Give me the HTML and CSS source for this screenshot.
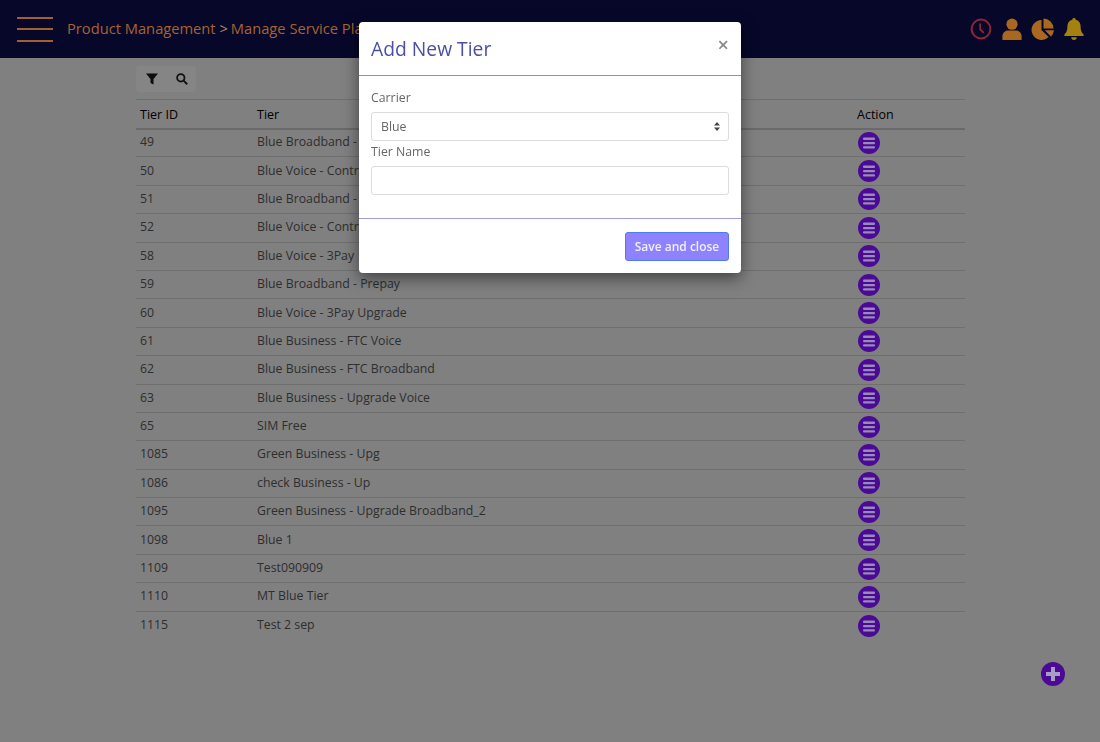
FILE: index.html
```html
<!DOCTYPE html>
<html lang="en">
<head>
  <meta charset="UTF-8" />
  <meta name="viewport" content="width=device-width, initial-scale=1.0" />
  <title>Manage Service Plan Tiers</title>
  <link rel="stylesheet" href="styles.css">
</head>
<body>
  <svg class="defs" width="0" height="0">
    <symbol id="ico-menu" viewBox="0 0 22 22">
      <circle cx="11" cy="11" r="11" fill="#4a0a96" />
      <rect x="5" y="5.6" width="12" height="2.3" rx="1" fill="#9a8ab8" />
      <rect x="5" y="9.9" width="12" height="2.3" rx="1" fill="#9a8ab8" />
      <rect x="5" y="14.2" width="12" height="2.3" rx="1" fill="#9a8ab8" />
    </symbol>
  </svg>

  <header class="topbar">
    <div class="burger"><span></span><span></span><span></span></div>
    <div class="crumbs">Product Management <span class="sep">&gt;</span>Manage Service Plans</div>
    <div class="top-icons">
      <svg class="clock" width="22" height="22" viewBox="0 0 22 22">
        <circle cx="11" cy="11" r="9.4" fill="none" stroke="#8c2632" stroke-width="2" />
        <path d="M10.2 5.5v6l3.6 3.4" fill="none" stroke="#8c2632" stroke-width="1.8" />
      </svg>
      <svg width="20" height="22" viewBox="0 0 20 22">
        <circle cx="10" cy="6.2" r="5.6" fill="#a9681f" />
        <path d="M0.4 22v-3.6c0-3.4 2.6-5.8 5.6-5.8h8c3 0 5.6 2.4 5.6 5.8V22z" fill="#a9681f" />
      </svg>
      <svg width="24" height="22" viewBox="0 0 24 22">
        <path d="M10.5 2V12L17.6 19.1A10 10 0 1 1 10.5 2z" fill="#a9681f" />
        <path d="M12.5 0.5A10 10 0 0 1 22.5 10.5H12.5z" fill="#a9681f" />
        <path d="M13.800 12.300H23A10 10 0 0 1 20 18.500z" fill="#a9681f" />
      </svg>
      <svg width="20" height="22" viewBox="0 0 20 22">
        <path d="M10 0a1.6 1.6 0 0 1 1.6 1.8c3.2.7 5 3.2 5 6.4 0 5 1.4 6.6 3 8.2v1.7H.4v-1.7c1.6-1.6 3-3.200 3-8.200 0-3.200 1.800-5.700 5-6.400A1.600 1.600 0 0 1 10 0z" fill="#a48210" />
        <path d="M7.300 19.300h5.400a2.700 2.700 0 0 1-5.400 0z" fill="#a48210" />
      </svg>
    </div>
  </header>

  <main class="content">
    <div class="tools">
      <svg width="12" height="12" viewBox="0 0 12 12"><path d="M0 .5h12L7.500 6v5.500l-3-1.500V6z" fill="#0c0c0c" /></svg>
      <svg width="12" height="12" viewBox="0 0 12 12">
        <circle cx="4.800" cy="4.800" r="3.700" fill="none" stroke="#111" stroke-width="1.800" />
        <path d="M7.600 7.600l3.600 3.600" stroke="#111" stroke-width="2" />
      </svg>
    </div>

    <table class="tiers">
      <thead>
        <tr><th class="col-id">Tier ID</th><th>Tier</th><th class="col-action">Action</th></tr>
      </thead>
      <tbody>
        <tr><td>49</td><td>Blue Broadband - Contract</td><td><svg class="act"><use href="#ico-menu" /></svg></td></tr>
        <tr><td>50</td><td>Blue Voice - Contract</td><td><svg class="act"><use href="#ico-menu" /></svg></td></tr>
        <tr><td>51</td><td>Blue Broadband - Upgrade</td><td><svg class="act"><use href="#ico-menu" /></svg></td></tr>
        <tr><td>52</td><td>Blue Voice - Contract</td><td><svg class="act"><use href="#ico-menu" /></svg></td></tr>
        <tr><td>58</td><td>Blue Voice - 3Pay</td><td><svg class="act"><use href="#ico-menu" /></svg></td></tr>
        <tr><td>59</td><td>Blue Broadband - Prepay</td><td><svg class="act"><use href="#ico-menu" /></svg></td></tr>
        <tr><td>60</td><td>Blue Voice - 3Pay Upgrade</td><td><svg class="act"><use href="#ico-menu" /></svg></td></tr>
        <tr><td>61</td><td>Blue Business - FTC Voice</td><td><svg class="act"><use href="#ico-menu" /></svg></td></tr>
        <tr><td>62</td><td>Blue Business - FTC Broadband</td><td><svg class="act"><use href="#ico-menu" /></svg></td></tr>
        <tr><td>63</td><td>Blue Business - Upgrade Voice</td><td><svg class="act"><use href="#ico-menu" /></svg></td></tr>
        <tr><td>65</td><td>SIM Free</td><td><svg class="act"><use href="#ico-menu" /></svg></td></tr>
        <tr><td>1085</td><td>Green Business - Upg</td><td><svg class="act"><use href="#ico-menu" /></svg></td></tr>
        <tr><td>1086</td><td>check Business - Up</td><td><svg class="act"><use href="#ico-menu" /></svg></td></tr>
        <tr><td>1095</td><td>Green Business - Upgrade Broadband_2</td><td><svg class="act"><use href="#ico-menu" /></svg></td></tr>
        <tr><td>1098</td><td>Blue 1</td><td><svg class="act"><use href="#ico-menu" /></svg></td></tr>
        <tr><td>1109</td><td>Test090909</td><td><svg class="act"><use href="#ico-menu" /></svg></td></tr>
        <tr><td>1110</td><td>MT Blue Tier</td><td><svg class="act"><use href="#ico-menu" /></svg></td></tr>
        <tr><td>1115</td><td>Test 2 sep</td><td><svg class="act"><use href="#ico-menu" /></svg></td></tr>
      </tbody>
    </table>
  </main>

  <svg class="add-btn" width="24" height="24" viewBox="0 0 24 24">
    <circle cx="12" cy="12" r="12" fill="#4a0a96" />
    <path d="M10 5h4v5h5v4h-5v5h-4v-5H5v-4h5z" fill="#a89bc4" />
  </svg>

  <div class="modal">
    <div class="modal-head">
      <h2>Add New Tier</h2>
      <span class="close">&times;</span>
    </div>
    <div class="modal-body">
      <label for="carrier">Carrier</label>
      <div class="select-wrap">
        <select id="carrier"><option>Blue</option></select>
        <svg class="updown" width="6" height="9" viewBox="0 0 6 9"><path d="M3 0l3 3.500H0zM3 9L0 5.500h6z" fill="#444" /></svg>
      </div>
      <label for="tierName">Tier Name</label>
      <input type="text" id="tierName" />
    </div>
    <div class="modal-foot">
      <button>Save and close</button>
    </div>
  </div>
</body>
</html>
```

FILE: styles.css
```css
* {
  box-sizing: border-box;
}

html, body {
  height: 100%;
}

body {
  margin: 0;
  overflow: hidden;
  font-family: "Open Sans", sans-serif;
  font-size: 12.3px;
  color: #333;
  background-color: #808080;
}

.defs {
  position: absolute;
}

/* top bar */
.topbar {
  display: flex;
  align-items: center;
  height: 58px;
  padding: 0 16px 0 17px;
  background-color: #07072a;
}

.burger {
  display: flex;
  flex-direction: column;
  gap: 9.5px;
  width: 36px;
  margin-right: 14px;
}

.burger span {
  height: 2px;
  background-color: #a06030;
}

.crumbs {
  padding-bottom: 2px;
  font-size: 14.7px;
  color: #a8622f;
}

.sep {
  margin-right: 3px;
  color: #b08a70;
}

.top-icons {
  display: flex;
  align-items: center;
  gap: 9px;
  margin-left: auto;
}

.clock {
  margin-right: 1px;
}

/* table */
.content {
  width: 829px;
  margin-left: 136px;
  padding-top: 8px;
}

.tools {
  display: flex;
  align-items: center;
  gap: 18px;
  width: 60px;
  height: 26px;
  padding-left: 10px;
  margin-bottom: 7px;
  background-color: #858585;
  border-radius: 4px;
}

.tiers {
  width: 100%;
  border-collapse: collapse;
  table-layout: fixed;
}

.tiers th {
  height: 29px;
  padding: 1px 4px 0;
  font-weight: 500;
  font-size: 12.5px;
  text-align: left;
  color: #000;
  border-top: 1px solid #6f6f6f;
  border-bottom: 2px solid #6a6a6a;
}

.col-id {
  width: 117px;
}

.col-action {
  width: 112px;
}

.tiers td {
  height: 28.4px;
  padding: 0 4px 2px;
  color: #2e2e2e;
  border-bottom: 1px solid #6f6f6f;
  vertical-align: middle;
}

.tiers tr:last-child td {
  border-bottom: none;
}

.act {
  display: block;
  width: 22px;
  height: 22px;
  margin: 2px 0 0 1px;
}

.add-btn {
  position: fixed;
  left: 1041px;
  top: 662px;
}

/* modal */
.modal {
  position: fixed;
  top: 22px;
  left: 359px;
  width: 382px;
  height: 251px;
  background-color: #fff;
  border-radius: 4px;
  box-shadow: 0 5px 16px rgba(0, 0, 0, 0.5);
}

.modal-head {
  display: flex;
  justify-content: space-between;
  height: 54px;
  padding: 13px 12px;
  border-bottom: 1px solid #9a86d0;
}

.modal-head h2 {
  margin: 0;
  font-size: 19.3px;
  font-weight: 400;
  line-height: 27px;
  color: #4a4fa5;
}

.close {
  margin-top: 1px;
  font-size: 20px;
  font-weight: 600;
  line-height: 17px;
  color: #888;
}

.modal-body {
  height: 143px;
  padding: 12px 12px 0;
  border-bottom: 1px solid #a99ade;
}

.modal-body label {
  display: block;
  height: 24px;
  padding-top: 1px;
  color: #666;
}

.modal-body label[for="tierName"] {
  height: 25px;
  padding-top: 2px;
}

.select-wrap {
  position: relative;
}

select, input {
  display: block;
  width: 100%;
  height: 29px;
  padding: 0 9px;
  font-family: inherit;
  font-size: 12.3px;
  color: #666;
  background-color: #fff;
  border: 1px solid #dcdcdc;
  border-radius: 3px;
  appearance: none;
}

.updown {
  position: absolute;
  right: 9px;
  top: 10px;
}

.modal-foot {
  display: flex;
  justify-content: flex-end;
  padding: 13px 12px;
}

.modal-foot button {
  width: 104px;
  height: 29px;
  padding: 0;
  font-family: inherit;
  font-size: 12px;
  font-weight: 600;
  color: #f2eefc;
  background-color: #8f82ff;
  border: 1px solid #4f7bf0;
  border-radius: 3px;
}
```
